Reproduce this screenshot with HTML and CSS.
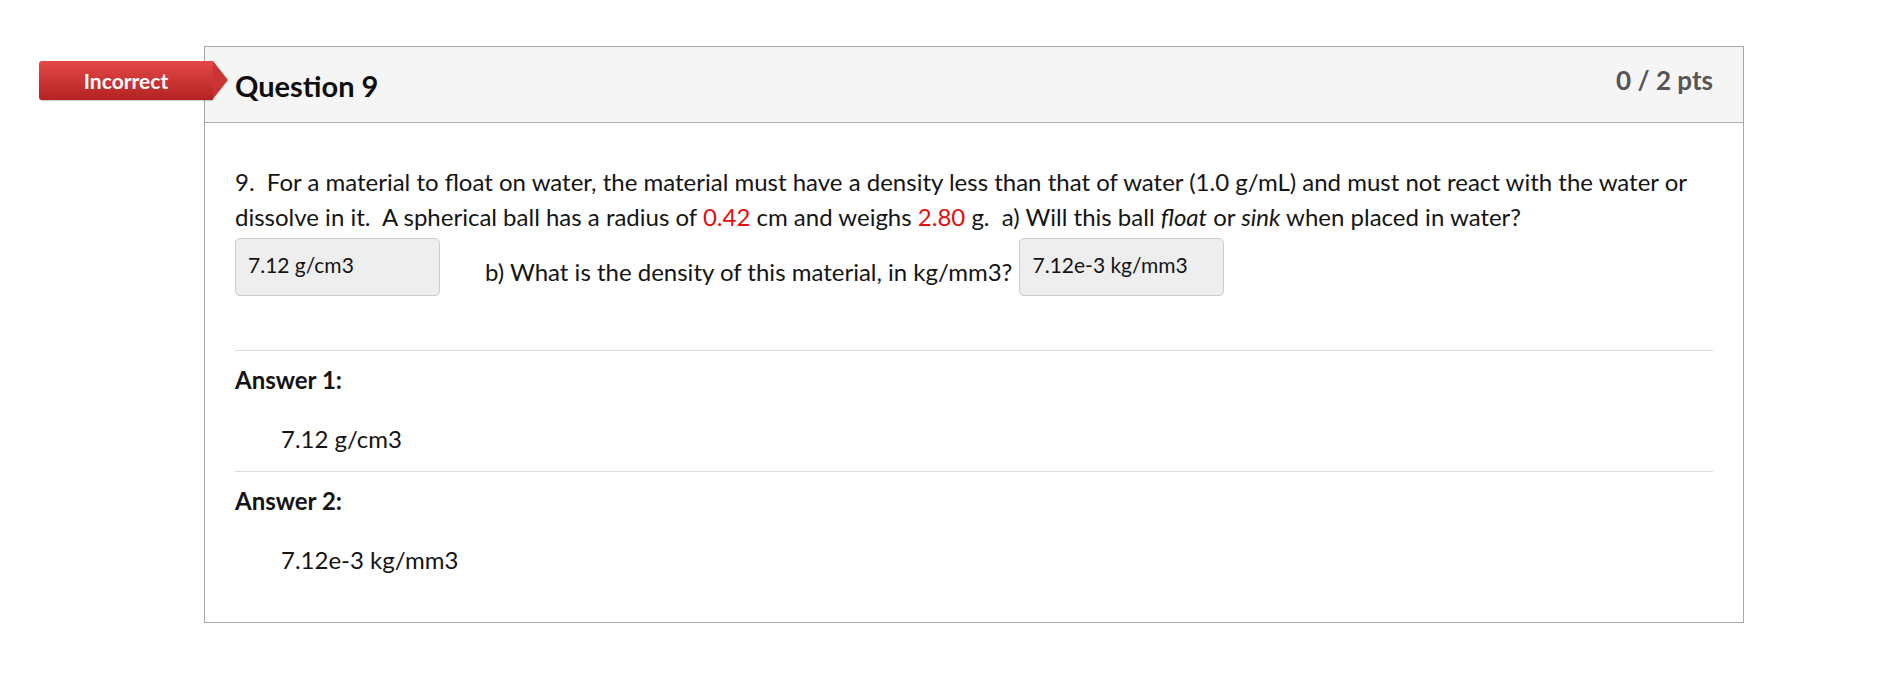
FILE: index.html
```html
<!DOCTYPE html>
<html lang="en">
<head>
<meta charset="utf-8">
<title>Question 9</title>
<link rel="stylesheet" href="styles.css">
</head>
<body>
<div class="page">
  <div class="card">
    <div class="badge"><span class="badge-text">Incorrect</span></div>
    <div class="card-header">
      <h2 class="title">Question 9</h2>
      <div class="pts">0 / 2 pts</div>
    </div>
    <div class="card-body">
      <p class="question">9.&nbsp; For a material to float on water, the material must have a density less than that of water (1.0 g/mL) and must not react with the water or dissolve in it.&nbsp; A spherical ball has a radius of <span class="num">0.42</span> cm and weighs <span class="num">2.80</span> g.&nbsp; a) Will this ball <em>float</em> or <em>sink</em> when placed in water? <span class="field field-a">7.12 g/cm3</span><span class="part-b">b) What is the density of this material, in kg/mm3?</span> <span class="field field-b">7.12e-3 kg/mm3</span></p>
      <div class="answer">
        <div class="answer-label">Answer 1:</div>
        <div class="answer-value">7.12 g/cm3</div>
      </div>
      <div class="answer">
        <div class="answer-label">Answer 2:</div>
        <div class="answer-value">7.12e-3 kg/mm3</div>
      </div>
    </div>
  </div>
</div>
</body>
</html>
```
FILE: styles.css
```css
html, body {
  margin: 0;
  padding: 0;
  background: #ffffff;
}
body {
  font-family: Lato, "Open Sans", "Liberation Sans", sans-serif;
  color: #141414;
}
.page {
  padding: 46px 0 0 204px;
}
.card {
  position: relative;
  box-sizing: border-box;
  width: 1540px;
  border: 1px solid #a9a9a9;
  background: #ffffff;
}
.badge {
  position: absolute;
  left: -166px;
  top: 14px;
  width: 174px;
  height: 39px;
  display: flex;
  align-items: center;
  justify-content: center;
  background: linear-gradient(#e54848, #b32222);
  border-radius: 3px 0 0 3px;
  box-shadow: 0 1px 1px rgba(0,0,0,0.2);
}
.badge::after {
  content: "";
  position: absolute;
  right: -15px;
  top: 0;
  width: 0;
  height: 0;
  border-top: 19.5px solid transparent;
  border-bottom: 19.5px solid transparent;
  border-left: 15px solid #cc3434;
}
.badge-text {
  color: #ffffff;
  font-weight: 700;
  font-size: 21px;
  line-height: 1;
}
.card-header {
  height: 75px;
  border-bottom: 1px solid #a9a9a9;
  background: #f5f5f5;
  display: flex;
  justify-content: space-between;
  align-items: flex-start;
  padding: 0 30px;
}
.title {
  margin: 0;
  padding-top: 22px;
  font-size: 29px;
  font-weight: 700;
  line-height: 34px;
  color: #0d0d0d;
}
.pts {
  padding-top: 16px;
  font-size: 26px;
  font-weight: 700;
  line-height: 34px;
  color: #555555;
}
.card-body {
  padding: 41px 30px 30px 30px;
}
.question {
  margin: 0 0 50px 0;
  font-size: 24px;
  line-height: 35px;
}
.num {
  color: #e60d0d;
}
.field {
  display: inline-block;
  box-sizing: border-box;
  width: 205px;
  height: 58px;
  margin: 4px 0;
  padding: 13px 0 0 12px;
  vertical-align: 8px;
  font-size: 21px;
  line-height: 26px;
  background: #eeeeee;
  border: 1px solid #cccccc;
  border-radius: 5px;
}
.field-a {
  margin-right: 45px;
}
.field-b {
  padding-left: 13px;
}
.answer {
  border-top: 1px solid #dddddd;
  padding-bottom: 15px;
}
.answer-label {
  margin-top: 11px;
  font-size: 24px;
  font-weight: 700;
  line-height: 35px;
}
.answer-value {
  margin-top: 24px;
  padding-left: 46px;
  font-size: 24px;
  line-height: 35px;
}
```
